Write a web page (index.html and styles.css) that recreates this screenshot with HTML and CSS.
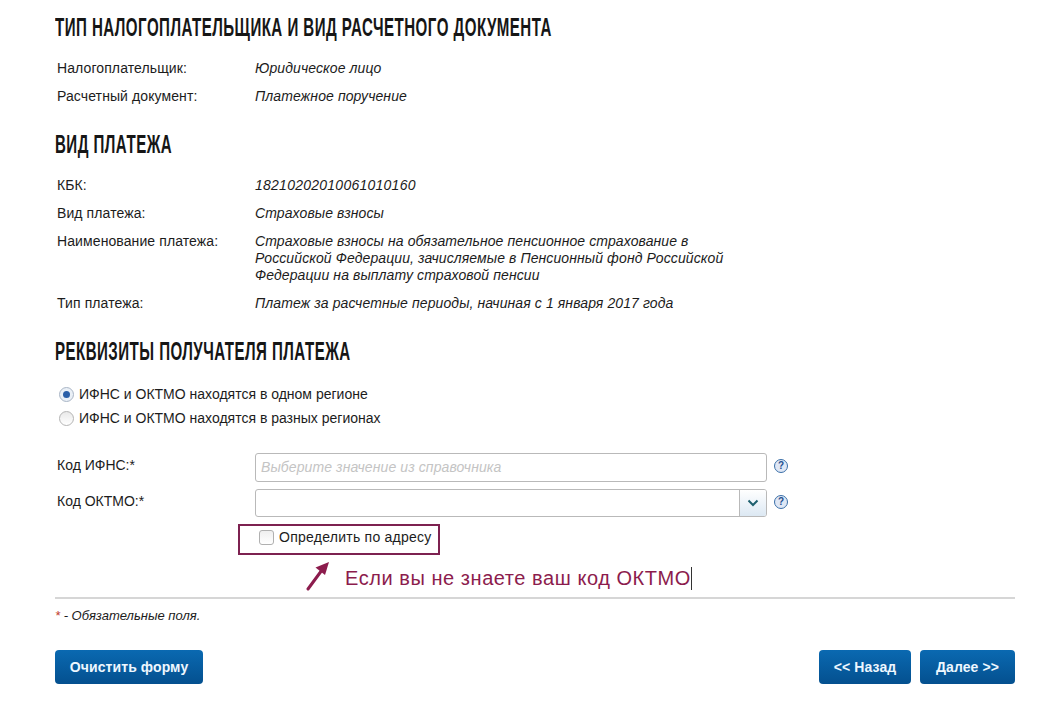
FILE: index.html
```html
<!DOCTYPE html>
<html lang="ru">
<head>
<meta charset="utf-8">
<title>Реквизиты платежа</title>
<link rel="stylesheet" href="styles.css">
</head>
<body>
<main class="page">
  <h2 class="heading h-first">ТИП НАЛОГОПЛАТЕЛЬЩИКА И ВИД РАСЧЕТНОГО ДОКУМЕНТА</h2>
  <dl class="info info-first">
    <dt>Налогоплательщик:</dt><dd>Юридическое лицо</dd>
    <dt>Расчетный документ:</dt><dd>Платежное поручение</dd>
  </dl>
  <h2 class="heading h-second">ВИД ПЛАТЕЖА</h2>
  <dl class="info info-second">
    <dt>КБК:</dt><dd class="code">18210202010061010160</dd>
    <dt>Вид платежа:</dt><dd>Страховые взносы</dd>
    <dt>Наименование платежа:</dt><dd class="wrap">Страховые взносы на обязательное пенсионное страхование в Российской Федерации, зачисляемые в Пенсионный фонд Российской Федерации на выплату страховой пенсии</dd>
    <dt>Тип платежа:</dt><dd>Платеж за расчетные периоды, начиная с 1 января 2017 года</dd>
  </dl>
  <h2 class="heading h-third">РЕКВИЗИТЫ ПОЛУЧАТЕЛЯ ПЛАТЕЖА</h2>
  <div class="radios">
    <div class="radio-row"><span class="radio radio-on"></span>ИФНС и ОКТМО находятся в одном регионе</div>
    <div class="radio-row"><span class="radio"></span>ИФНС и ОКТМО находятся в разных регионах</div>
  </div>
  <div class="field field-first">
    <div class="field-label">Код ИФНС:*</div>
    <div class="input"><span class="placeholder">Выберите значение из справочника</span></div>
    <span class="help">?</span>
  </div>
  <div class="field field-second">
    <div class="field-label">Код ОКТМО:*</div>
    <div class="input input-select">
      <span class="select-btn">
        <svg width="12" height="8" viewBox="0 0 12 8"><path d="M1.500 1.500 6 6l4.500-4.500" fill="none" stroke="#1d5f6e" stroke-width="2"/></svg>
      </span>
    </div>
    <span class="help">?</span>
  </div>
  <div class="highlight"><span class="checkbox"></span>Определить по адресу</div>
  <div class="annotation">
    <svg class="arrow" width="26" height="30" viewBox="0 0 26 30"><path d="M3 28 17 9" fill="none" stroke="#8c1c4d" stroke-width="3" stroke-linecap="round"/><path d="M24 1 10.500 6.500 20 14Z" fill="#8c1c4d"/></svg>
    <span class="annotation-text">Если вы не знаете ваш код ОКТМО</span><span class="caret"></span>
  </div>
  <hr class="rule">
  <p class="note"><span class="star">*</span> - Обязательные поля.</p>
  <div class="actions">
    <button class="btn btn-clear" type="button">Очистить форму</button>
    <div class="actions-right">
      <button class="btn btn-back" type="button">&lt;&lt; Назад</button>
      <button class="btn btn-next" type="button">Далее &gt;&gt;</button>
    </div>
  </div>
</main>
</body>
</html>
```
FILE: styles.css
```css
* { box-sizing: border-box; }
html, body { margin: 0; padding: 0; background: #fff; }
body { font-family: "Liberation Sans", Arial, sans-serif; font-size: 14px; color: #1c1c1c; overflow: hidden; }
.page { width: 1052px; height: 704px; padding: 0 37px 0 55px; }

.heading {
  margin: 0;
  font-family: "Liberation Sans", sans-serif;
  font-size: 26px;
  line-height: 28px;
  font-weight: 700;
  letter-spacing: 0.8px;
  color: #161616;
  white-space: nowrap;
  transform: scaleX(0.58);
  transform-origin: left center;
}
.h-first { margin-top: 13px; height: 28px; }
.h-second { margin-top: 25px; }
.h-third { margin-top: 25px; }

.info { margin: 0; padding-left: 2px; display: grid; grid-template-columns: 198px 480px; row-gap: 11px; line-height: 17px; letter-spacing: 0.1px; }
.info dt { margin: 0; }
.info dd { margin: 0; font-style: italic; white-space: nowrap; }
.info dd.wrap { white-space: normal; }
.info dd.code { letter-spacing: 0.25px; }
.info-first { margin-top: 19px; }
.info-second { margin-top: 19px; }

.radios { margin-top: 17px; padding-left: 4px; }
.radio-row { display: flex; align-items: center; height: 24px; gap: 5px; }
.radio {
  width: 15px; height: 15px; border-radius: 50%;
  border: 1px solid #b4b4b4;
  background: linear-gradient(#e9e9e9, #fff);
  display: flex; align-items: center; justify-content: center;
}
.radio-on { border-color: #aab6c6; background: #eaf0f7; }
.radio-on::after { content: ""; width: 7px; height: 7px; border-radius: 50%; background: #2a5fa8; }

.field { display: flex; align-items: center; padding-left: 2px; }
.field-first { margin-top: 23px; height: 29px; }
.field-second { margin-top: 7px; height: 28px; }
.field-label { width: 198px; margin-top: -5px; }
.input {
  width: 512px; height: 100%;
  border: 1px solid #b9b9b9; border-radius: 3px;
  background: #fff; padding: 0 0 2px 5px;
  display: flex; align-items: center; justify-content: flex-end;
  overflow: hidden;
}
.input:not(.input-select) { justify-content: flex-start; }
.input-select { padding: 0; }
.placeholder { font-style: italic; color: #c4c4c4; letter-spacing: 0.1px; }
.select-btn {
  width: 27px; height: 100%;
  border-left: 1px solid #b9b9b9;
  background: linear-gradient(#fff, #dce8f3);
  display: flex; align-items: center; justify-content: center;
}
.help {
  width: 14px; height: 14px; margin: -3px 0 0 7px; border-radius: 50%;
  border: 1px solid #3a6fa8; background: #dfe7f5; color: #1f4f8f;
  font-size: 10px; font-weight: 700; line-height: 12px; text-align: center;
}

.highlight {
  margin: 7px 0 0 183px; width: 202px; height: 31px;
  border: 2px solid #7d2150;
  display: flex; align-items: center; padding: 0 0 5px 19px; gap: 5px;
  color: #1c1c1c; white-space: nowrap; letter-spacing: 0.25px;
}
.checkbox { width: 15px; height: 15px; border: 1px solid #b0b0b0; border-radius: 3px; background: linear-gradient(#efefef, #fff); }

.annotation { display: flex; align-items: center; height: 40px; margin-left: 250px; margin-top: 2px; }
.arrow { margin-right: 14px; margin-top: -2px; }
.annotation-text { font-size: 20px; letter-spacing: 0.55px; color: #8c1c4d; white-space: nowrap; margin-top: 2px; }
.caret { width: 1px; height: 23px; background: #333; margin-top: 2px; }

.rule { margin: 0; border: 0; height: 2px; background: #d6d6d6; }
.note { margin: 9px 0 0; font-size: 13px; line-height: 15px; font-style: italic; }
.star { color: #c0392b; }

.actions { display: flex; justify-content: space-between; margin-top: 27px; }
.actions-right { display: flex; gap: 5px; }
.btn {
  height: 34px; padding: 0; border: 0; border-radius: 4px;
  background: linear-gradient(#0a69b1, #04508f);
  color: #eef7ff; font-family: "Liberation Sans", sans-serif;
  font-size: 14px; font-weight: 700; letter-spacing: 0.1px;
}
.btn-clear { width: 148px; }
.btn-back { width: 92px; }
.btn-next { width: 95px; margin-left: 4px; }
```
